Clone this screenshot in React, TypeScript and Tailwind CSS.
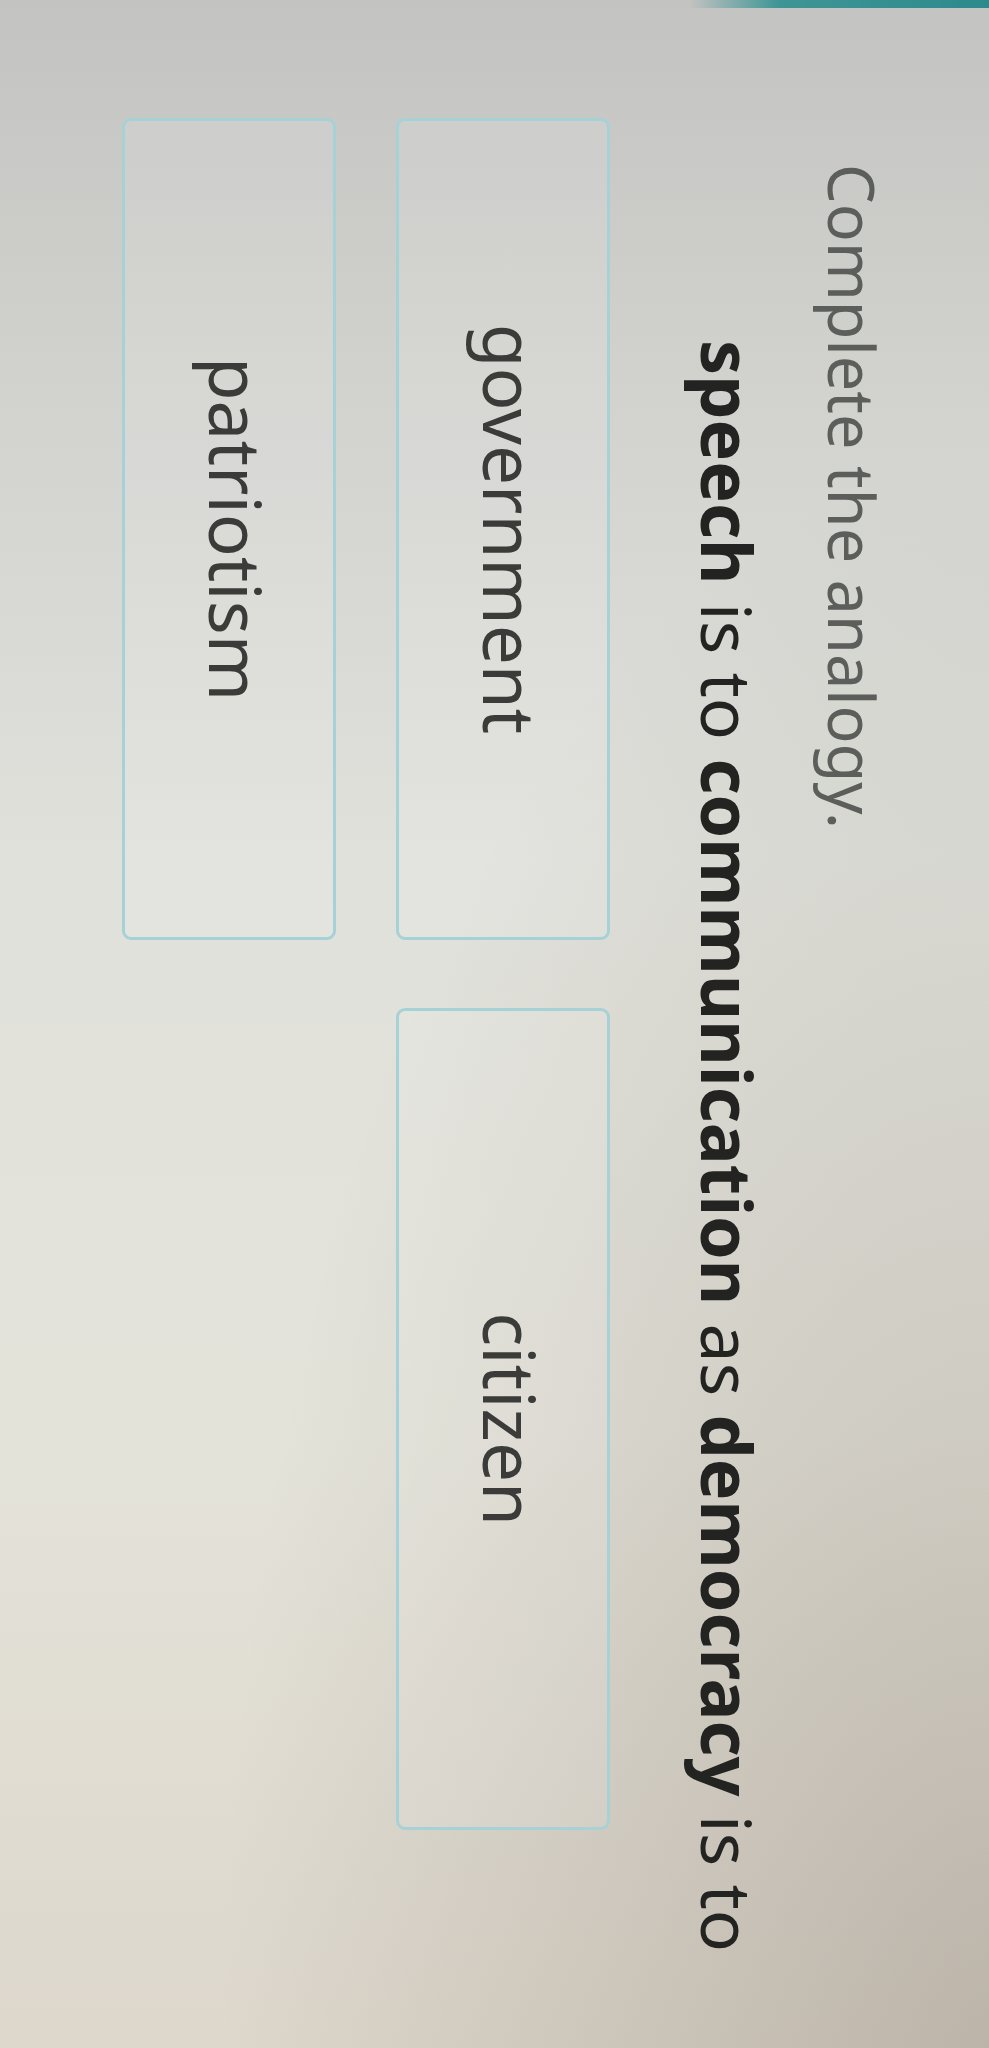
import React from "react";

const options = [
  ["government", "citizen"],
  ["patriotism"],
];

function OptionBox({ label }: { label: string }) {
  return (
    <div className="w-[822px] h-[214px] shrink-0 flex items-center justify-center pb-[16px] rounded-[9px] border-[3px] border-[#a6d2d7] bg-white/10">
      <span className="text-[71px] leading-none text-[#3b3c3a]">{label}</span>
    </div>
  );
}

export default function App() {
  return (
    <div className="w-[989px] h-[2048px] overflow-hidden bg-[radial-gradient(ellipse_at_100%_100%,rgba(95,80,70,0.26)_0%,rgba(0,0,0,0)_55%),linear-gradient(180deg,#c3c3c1_0%,#d1d2ce_18%,#e0e1db_42%,#e4e3da_70%,#ddd7cc_100%)]">
      {/* page photographed sideways: lay it out upright, then turn it */}
      <div className="w-[2048px] h-[989px] origin-top-left translate-x-[989px] rotate-90 flex font-['Noto_Sans','Open_Sans',sans-serif]">
        <div className="w-[8px] h-[300px] shrink-0 bg-[linear-gradient(180deg,#2c8a8c_0%,#3f9596_70%,rgba(120,150,150,0)_100%)]" />
        <div className="flex flex-col pt-[105px]">
          <h1 className="ml-[156px] text-[63px] leading-none font-normal text-[#5c5e5b]">
            Complete the analogy.
          </h1>
          <p className="ml-[332px] mt-[58px] text-[70px] leading-none text-[#232422]">
            <b className="font-bold">speech</b> is to <b className="font-bold">communication</b> as{" "}
            <b className="font-bold">democracy</b> is to
          </p>
          <div className="ml-[110px] mt-[83px] flex flex-col gap-[60px]">
            {options.map((row, i) => (
              <div key={i} className="flex gap-[68px]">
                {row.map((label) => (
                  <OptionBox key={label} label={label} />
                ))}
              </div>
            ))}
          </div>
        </div>
      </div>
    </div>
  );
}
